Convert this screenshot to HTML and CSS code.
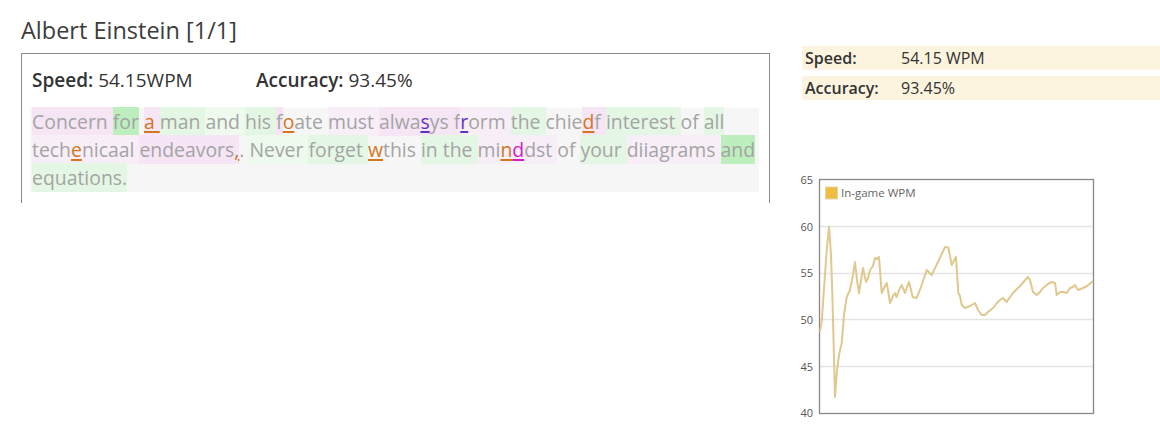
FILE: index.html
```html
<!DOCTYPE html>
<html>
<head>
<meta charset="utf-8">
<link rel="stylesheet" href="styles.css">
</head>
<body>
<div class="page">
  <section class="game">
    <h1 class="title">Albert Einstein [1/1]</h1>
    <div class="box">
      <div class="box-stats">
        <span class="stat"><b>Speed:</b> 54.15WPM</span>
        <span class="stat"><b>Accuracy:</b> 93.45%</span>
      </div>
      <div class="replay">
        <div class="line"><span class="p">Concern </span><span class="G">for</span><span class="w"> </span><span class="p"><u class="eo">a </u></span><span class="g">man </span><span class="g2">and </span><span class="g">his </span><span class="p">f</span><span class="w"><u class="eo">o</u>ate </span><span class="p2">must </span><span class="p">alwa<u class="ev">s</u>ys </span><span class="p">f</span><span class="p2"><u class="ev">r</u>orm </span><span class="g">the </span><span class="w">chie</span><span class="p"><u class="eo">d</u>f </span><span class="g">interest </span><span class="w">of </span><span class="g">all</span></div>
        <div class="line"><span class="p2">tech<u class="eo">e</u>nicaal </span><span class="p">endeavors</span><span class="p"><u class="eo">,</u></span><span class="w">. </span><span class="g2">Never </span><span class="g">forget </span><span class="w"><u class="eo">w</u>this </span><span class="g">in the </span><span class="p2">mi<u class="eo">n</u><u class="em">d</u>dst </span><span class="w">of </span><span class="g">your </span><span class="p2">diiagrams </span><span class="G">and</span></div>
        <div class="line"><span class="g">equations.</span></div>
      </div>
    </div>
  </section>
  <aside class="side">
    <div class="summary">
      <div class="row"><span class="label">Speed:</span><span class="value">54.15 WPM</span></div>
      <div class="row"><span class="label">Accuracy:</span><span class="value">93.45%</span></div>
    </div>
    <svg class="chart" width="305" height="255" viewBox="0 0 305 255">
      <g class="grid">
        <line x1="25" y1="56.5" x2="298" y2="56.5"/>
        <line x1="25" y1="103.5" x2="298" y2="103.5"/>
        <line x1="25" y1="149.5" x2="298" y2="149.5"/>
        <line x1="25" y1="196.5" x2="298" y2="196.5"/>
      </g>
      <rect class="frame" x="24.5" y="9.5" width="274" height="234"/>
      <g class="ylab">
        <text x="18" y="14">65</text>
        <text x="18" y="60.5">60</text>
        <text x="18" y="107">55</text>
        <text x="18" y="154">50</text>
        <text x="18" y="200.5">45</text>
        <text x="18" y="247">40</text>
      </g>
      <rect class="legend-box" x="30.5" y="17" width="12" height="12"/>
      <text class="legend-text" x="46" y="27">In-game WPM</text>
      <polyline class="series" points="25,161.7 26.7,151.7 31.7,80 34,57 36,85 37.5,130 40,227 42,200 44,185 46.7,173 49,145 51.7,127 55,120 58,105 60,92 62,110 64,123 68,98 71,112 73,108 75,100 78,96 80,88 82,89 84,87 86.7,123 89,118 91.7,113 93,120 95,133 98,126 100,123 101.7,127 104,120 106.7,115 110,123 112,117 114,112 117.7,127 121.7,128 126,117 131.7,100 136.7,105 143,92 150,77 153.3,77.5 156.7,95 161,87 163.3,123 165,126 166.7,135 170,138 175,136 180,133 183,140 186.7,145 190,145 194,141 198,138 202,133 205,130 208,128 211.7,132 215,127 218,123 225,116 233,107 235,110 238,122 241.7,125 245,122 248,118 253,114 256.7,112 260,113 261.7,125 265,122 268,122 271.7,123 275,118 278,117 280,115 283,120 288,118 292,116 296.7,112 298,111"/>
    </svg>
  </aside>
</div>
</body>
</html>
```
FILE: styles.css
```css
html, body {
  margin: 0;
  padding: 0;
  background: #ffffff;
}
body {
  font-family: "Open Sans", "Noto Sans", "DejaVu Sans", sans-serif;
  color: #333;
}
.page {
  display: flex;
  align-items: flex-start;
}
.game {
  padding: 15px 0 0 21px;
  width: 749px;
}
.title {
  margin: 0 0 8px 0;
  font-size: 23.5px;
  font-weight: normal;
  line-height: 30px;
  color: #3c3c3c;
}
.box {
  border: 1px solid #8a8a8a;
  border-bottom: none;
  padding: 0 10px 11px 8px;
}
.box-stats {
  display: flex;
  padding: 14px 2px 16px;
  font-size: 19px;
  line-height: 24px;
  color: #333;
}
.box-stats .stat:first-child {
  width: 224px;
}
.box-stats b {
  font-weight: 600;
}
.replay {
  background: #f6f6f6;
  padding: 0 2px;
  font-size: 19.4px;
  line-height: 28px;
  color: #a4a4a4;
}
.line {
  height: 28px;
  white-space: pre;
}
.line span {
  padding: 1px 0;
}
.g { background: #e4f7e4; }
.g2 { background: #eefaee; }
.G { background: #bdeebd; }
.p { background: #f5e5f5; }
.p2 { background: #f8eef8; }
.w { background: transparent; }
u { text-decoration: underline; text-decoration-thickness: 2px; text-underline-offset: 2px; }
.eo { color: #d4771c; }
.ev { color: #5e33c2; }
.em { color: #d21fc4; }
.side {
  margin-left: 32px;
  width: 358px;
}
.summary {
  padding: 46px 0 0 0;
  display: flex;
  flex-direction: column;
  gap: 6px;
}
.row {
  display: flex;
  align-items: center;
  height: 24px;
  background: #fcf4df;
  font-size: 16px;
  color: #333;
}
.row .label {
  width: 96px;
  padding-left: 3px;
  font-weight: 600;
}
.chart {
  display: block;
  margin: 70px 0 0 -7px;
}
.grid line {
  stroke: #e4e4e4;
  stroke-width: 1.5;
}
.frame {
  fill: none;
  stroke: #888;
  stroke-width: 1.3;
}
.ylab text {
  font-family: "Open Sans", "DejaVu Sans", sans-serif;
  font-size: 11px;
  fill: #555;
  text-anchor: end;
}
.legend-box {
  fill: #f0bd3f;
  stroke: #e2d6b4;
  stroke-width: 1;
}
.legend-text {
  font-family: "Open Sans", "DejaVu Sans", sans-serif;
  font-size: 11.5px;
  fill: #666;
}
.series {
  fill: none;
  stroke: #e0c88e;
  stroke-width: 2;
  stroke-linejoin: round;
}
```
